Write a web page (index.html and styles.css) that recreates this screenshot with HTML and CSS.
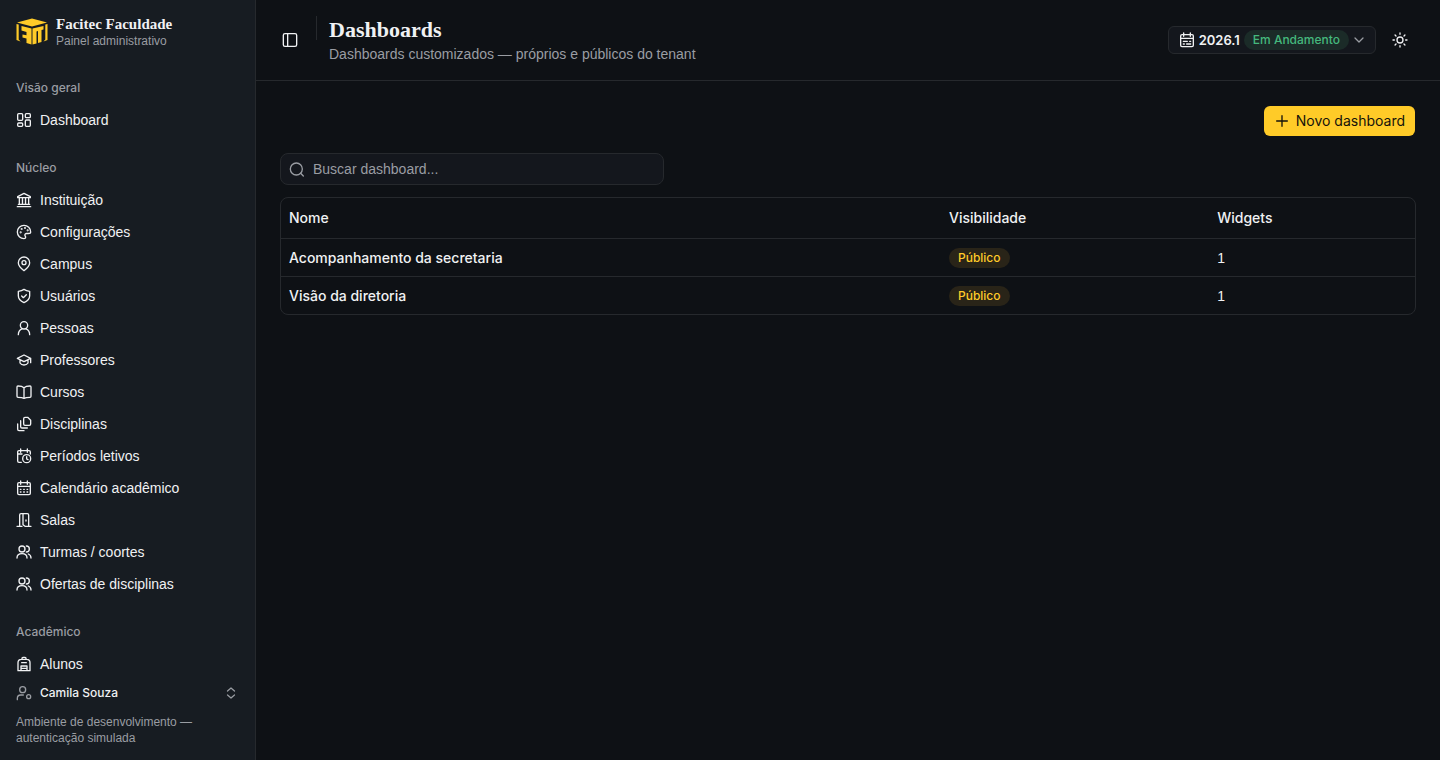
FILE: index.html
```html
<!DOCTYPE html>
<html lang="pt-BR">
  <head>
    <meta charset="UTF-8" />
    <meta name="viewport" content="width=device-width, initial-scale=1.0" />
    <title>Dashboards</title>
    <link rel="stylesheet" href="styles.css">
  </head>
  <body>
    <aside class="sidebar">
      <div class="brand">
        <svg class="brand-logo" viewBox="0 0 32 32" aria-hidden="true">
          <path d="M1 6.500 16 2.500 31 6.500 16 10.500Z" />
          <path d="M.5 8 2.700 8.600V23.500L4.500 25.500.5 24ZM31.500 8 29.300 8.600V23.500L27.500 25.500 31.500 24Z" />
          <path d="M5.500 10 15.500 12.500V28.500L10.500 27V22.500L6.500 21.500V18.500L10.500 19.300V16L5.500 14.500Z" />
          <path d="M16.500 12.500 27.500 10V13.500L25.500 14V26L22 27V15L20.500 15.400V27.500L16.500 28.500Z" />
        </svg>
        <div class="brand-text">
          <strong>Facitec Faculdade</strong>
          <span>Painel administrativo</span>
        </div>
      </div>

      <nav class="nav">
        <section class="group">
          <h2>Visão geral</h2>
          <a href="#"><svg class="icon" viewBox="0 0 24 24"><rect x="2.500" y="2.500" width="7.500" height="10" rx="1.500" /><rect x="14" y="2.500" width="7.500" height="6" rx="1.500" /><rect x="2.500" y="16.500" width="7.500" height="5" rx="1.500" /><rect x="14" y="12" width="7.500" height="9.500" rx="1.500" /></svg>Dashboard</a>
        </section>
        <section class="group">
          <h2>Núcleo</h2>
          <a href="#"><svg class="icon" viewBox="0 0 24 24"><path d="M2.500 8.500V7L12 2l9.500 5v1.500ZM5 9v9M9.700 9v9M14.300 9v9M19 9v9M3.500 18.500h17M2 22h20" /></svg>Instituição</a>
          <a href="#"><svg class="icon" viewBox="0 0 24 24"><path d="M22 12C22 6.500 17.500 2 12 2S2 6.500 2 12s4.500 10 10 10c1.700 0 2.500-1 2.500-2.200 0-1.600-1.200-1.900-1.200-3.300 0-1.300 1-2.200 2.400-2.200h2.800C20.700 14.300 22 13.500 22 12Z" /><circle cx="7" cy="12.500" r=".6" /><circle cx="8.500" cy="7.500" r=".6" /><circle cx="13.500" cy="6" r=".6" /><circle cx="17.500" cy="9.500" r=".6" /></svg>Configurações</a>
          <a href="#"><svg class="icon" viewBox="0 0 24 24"><path d="M12 22c-2.500-2-8.500-6.500-8.500-12a8.500 8.500 0 0 1 17 0c0 5.500-6 10-8.500 12Z" /><circle cx="12" cy="10" r="3" /></svg>Campus</a>
          <a href="#"><svg class="icon" viewBox="0 0 24 24"><path d="M12 2c2.500 1.700 5 2.500 8.500 3v6.500c0 5.500-4 8.500-8.500 10.500-4.500-2-8.500-5-8.500-10.500V5C7 4.500 9.500 3.700 12 2Z" /><path d="m8.500 12 2.500 2.500L15.500 10" /></svg>Usuários</a>
          <a href="#"><svg class="icon" viewBox="0 0 24 24"><circle cx="12" cy="8" r="5.500" /><path d="M3.500 22c0-4.500 2.500-7.500 5.500-8.700M20.500 22c0-4.500-2.500-7.500-5.500-8.700" /></svg>Pessoas</a>
          <a href="#"><svg class="icon" viewBox="0 0 24 24"><path d="M2 9.500 12 4.500l10 5-10 5ZM6 12v4.500c2.500 4 9.500 4 12 0V12M22 9.500V16" /></svg>Professores</a>
          <a href="#"><svg class="icon" viewBox="0 0 24 24"><path d="M12 5.500C10 3.700 7 3 3 3c-1 0-1.500.5-1.500 1.500v14c0 1 .5 1.500 1.500 1.500 4 0 7 .3 9 1.500 2-1.200 5-1.500 9-1.500 1 0 1.500-.5 1.500-1.500v-14C22.500 3.500 22 3 21 3c-4 0-7 .7-9 2.500ZM12 5.500v16" /></svg>Cursos</a>
          <a href="#"><svg class="icon" viewBox="0 0 24 24"><path d="M13.500 2h4L22 6.500V12c0 1.500-.5 2-2 2h-6.500c-1.500 0-2-.5-2-2V4c0-1.500.5-2 2-2ZM7 7v9c0 1.500.5 2 2 2h8M2.500 12v8c0 1.500.5 2 2 2H12" /></svg>Disciplinas</a>
          <a href="#"><svg class="icon" viewBox="0 0 24 24"><path d="M7 1.500v5M17 1.500v5M21.500 9V6c0-1.300-.7-2-2-2h-15c-1.300 0-2 .7-2 2v13.500c0 1.300.7 2 2 2H8M2.500 9H9" /><circle cx="16" cy="16" r="6" /><path d="M16 13v3.500l2 1" /></svg>Períodos letivos</a>
          <a href="#"><svg class="icon" viewBox="0 0 24 24"><rect x="2.500" y="4" width="19" height="18" rx="2" /><path d="M7 1.500v5M17 1.500v5M2.500 9.500h19M6.500 14h1M11.500 14h1M16.500 14h1M6.500 18h1M11.500 18h1M16.500 18h1" /></svg>Calendário acadêmico</a>
          <a href="#"><svg class="icon" viewBox="0 0 24 24"><path d="M1.500 21.500h4V4.500c0-1.500.5-2 2-2h9.500c1.500 0 2 .5 2 2v17h3.500M10.500 2.500v16.500l3 2.500H19M5.500 21.500H9M15 12v1.500" /></svg>Salas</a>
          <a href="#"><svg class="icon" viewBox="0 0 24 24"><circle cx="9" cy="7.500" r="4.500" /><path d="M1.500 21c0-4 3-6.500 7.500-6.500s7.500 2.500 7.500 6.500M15.500 3a4.500 4.500 0 0 1 0 9M18.500 15c2.500 1 4 3 4 6" /></svg>Turmas / coortes</a>
          <a href="#"><svg class="icon" viewBox="0 0 24 24"><circle cx="9" cy="7.500" r="4.500" /><path d="M1.500 21c0-4 3-6.500 7.500-6.500s7.500 2.500 7.500 6.500M15.500 3a4.500 4.500 0 0 1 0 9M18.500 15c2.500 1 4 3 4 6" /></svg>Ofertas de disciplinas</a>
        </section>
        <section class="group">
          <h2>Acadêmico</h2>
          <a href="#"><svg class="icon" viewBox="0 0 24 24"><path d="M9 5V3.500C9 2.500 9.500 2 10.500 2h3c1 0 1.500.5 1.500 1.500V5M3 22V10c0-3.500 2-5 5-5h8c3 0 5 1.500 5 5v12ZM8.500 10h7M7.500 22v-7h9v7M7.500 18.500h9" /></svg>Alunos</a>
        </section>
      </nav>

      <div class="sidebar-footer">
        <button class="user" type="button" aria-haspopup="menu">
          <svg class="icon muted" viewBox="0 0 24 24"><circle cx="10" cy="7" r="4.500" /><path d="M2 22v-2c0-3 2-5 5-5h4" /><circle cx="19" cy="17.500" r="3" /></svg>
          <span>Camila Souza</span>
          <svg class="icon icon-sm muted" viewBox="0 0 24 24"><path d="m5 8 7-6 7 6M5 16l7 6 7-6" /></svg>
        </button>
        <p>Ambiente de desenvolvimento — autenticação simulada</p>
      </div>
    </aside>

    <main class="content">
      <header class="topbar">
        <button class="icon-button" type="button" aria-label="Alternar menu">
          <svg class="icon" viewBox="0 0 24 24"><rect x="2" y="2.500" width="20" height="19" rx="2.500" /><path d="M8.500 2.500v19" /></svg>
        </button>
        <span class="divider"></span>
        <div class="heading">
          <h1>Dashboards</h1>
          <p>Dashboards customizados — próprios e públicos do tenant</p>
        </div>
        <button class="period" type="button" aria-haspopup="listbox">
          <svg class="icon" viewBox="0 0 24 24"><rect x="2.500" y="4" width="19" height="18" rx="2" /><path d="M7 1.500v5M17 1.500v5M2.500 9.500h19M6.500 14h6M16 14h1.500M6.500 18h1.500M11.500 18h6" /></svg>
          <span>2026.1</span>
          <span class="badge badge-green">Em Andamento</span>
          <svg class="icon icon-sm muted" viewBox="0 0 24 24"><path d="m4 8 8 8 8-8" /></svg>
        </button>
        <button class="icon-button icon-button-lg" type="button" aria-label="Alternar tema">
          <svg class="icon" viewBox="0 0 24 24"><circle cx="12" cy="12" r="4.500" /><path d="M12 1.500v2M12 20.500v2M1.500 12h2M20.500 12h2M4.600 4.600 6 6M18 18l1.400 1.400M4.600 19.400 6 18M18 6l1.400-1.400" /></svg>
        </button>
      </header>

      <div class="page">
        <button class="primary" type="button">
          <svg class="icon" viewBox="0 0 24 24"><path d="M12 4v16M4 12h16" /></svg>
          Novo dashboard
        </button>
        <div class="list">
          <label class="search">
            <svg class="icon muted" viewBox="0 0 24 24"><circle cx="11" cy="12" r="9" /><path d="m17.500 18.500 4 4" /></svg>
            <input type="text" placeholder="Buscar dashboard..." aria-label="Buscar dashboard" />
          </label>
          <div class="table-wrap">
            <table>
              <thead>
                <tr>
                  <th class="col-name">Nome</th>
                  <th class="col-visibility">Visibilidade</th>
                  <th>Widgets</th>
                </tr>
              </thead>
              <tbody>
                <tr>
                  <td class="name">Acompanhamento da secretaria</td>
                  <td><span class="badge badge-yellow">Público</span></td>
                  <td>1</td>
                </tr>
                <tr>
                  <td class="name">Visão da diretoria</td>
                  <td><span class="badge badge-yellow">Público</span></td>
                  <td>1</td>
                </tr>
              </tbody>
            </table>
          </div>
        </div>
      </div>
    </main>
  </body>
</html>
```
FILE: styles.css
```css
:root {
  --bg: #0e1115;
  --sidebar: #171c22;
  --field: #14171d;
  --border: #26292d;
  --text: #f0f1f3;
  --muted: #9a9da3;
  --yellow: #ffcb28;
  --green: #45b87d;
  --font-medium: Inter, "Liberation Sans", sans-serif;
}

* {
  box-sizing: border-box;
}

body {
  margin: 0;
  display: flex;
  height: 100vh;
  overflow: hidden;
  background: var(--bg);
  color: var(--text);
  font-family: "Liberation Sans", Arial, sans-serif;
  font-size: 14px;
  line-height: 20px;
}

h1,
h2,
p {
  margin: 0;
}

button,
input {
  font: inherit;
  color: inherit;
}

button {
  display: flex;
  align-items: center;
  border: 0;
  padding: 0;
  background: none;
  cursor: pointer;
}

.icon {
  width: 16px;
  height: 16px;
  flex-shrink: 0;
  fill: none;
  stroke: currentColor;
  stroke-width: 2;
  stroke-linecap: round;
  stroke-linejoin: round;
}

.icon-sm {
  width: 12px;
  height: 12px;
  stroke-width: 2.500;
}

.muted {
  color: var(--muted);
}

/* sidebar */
.sidebar {
  width: 256px;
  flex-shrink: 0;
  display: flex;
  flex-direction: column;
  background: var(--sidebar);
  border-right: 1px solid var(--border);
}

.brand {
  display: flex;
  align-items: center;
  gap: 8px;
  height: 64px;
  flex-shrink: 0;
  padding: 0 16px;
}

.brand-logo {
  width: 32px;
  height: 32px;
  fill: var(--yellow);
}

.brand-text {
  display: flex;
  flex-direction: column;
  font-size: 12px;
  line-height: 16px;
}

.brand-text strong {
  font-family: "Liberation Serif", serif;
  font-size: 15px;
  line-height: 18px;
}

.brand-text span {
  color: var(--muted);
}

.nav {
  flex: 1;
  min-height: 0;
  overflow: hidden;
}

.group {
  padding: 8px;
}

.group h2 {
  padding: 0 8px;
  color: var(--muted);
  font-family: var(--font-medium);
  font-size: 12px;
  font-weight: 500;
  line-height: 32px;
}

.group a {
  display: flex;
  align-items: center;
  gap: 8px;
  height: 32px;
  padding: 0 8px;
  color: inherit;
  text-decoration: none;
}

.sidebar-footer {
  padding: 0 8px 14px;
  font-size: 12px;
  line-height: 16px;
}

.user {
  width: 100%;
  height: 26px;
  gap: 8px;
  padding: 0 10px 0 8px;
  font-family: var(--font-medium);
  font-weight: 500;
}

.user span {
  flex: 1;
  text-align: left;
}

.sidebar-footer p {
  padding: 8px 8px 0;
  color: var(--muted);
}

/* top bar */
.content {
  flex: 1;
  min-width: 0;
}

.topbar {
  display: flex;
  align-items: center;
  padding: 16px 24px 16px 20px;
  border-bottom: 1px solid var(--border);
}

.icon-button {
  justify-content: center;
  width: 28px;
  height: 28px;
}

.icon-button-lg {
  width: 32px;
}

.divider {
  align-self: flex-start;
  width: 1px;
  height: 24px;
  margin: 0 12px;
  background: var(--border);
}

.heading {
  flex: 1;
}

.heading h1 {
  font-family: "Liberation Serif", serif;
  font-size: 22px;
  line-height: 28px;
}

.heading p {
  color: var(--muted);
}

.period {
  height: 28px;
  gap: 4px;
  margin-right: 8px;
  padding: 0 10px;
  border: 1px solid var(--border);
  border-radius: 6px;
  background: var(--field);
  font-family: var(--font-medium);
  font-size: 13px;
  font-weight: 600;
}

.badge {
  display: inline-flex;
  align-items: center;
  height: 20px;
  padding: 0 9px;
  border-radius: 10px;
  font-family: var(--font-medium);
  font-size: 12px;
  font-weight: 500;
}

.badge-green {
  background: #1b2b28;
  color: var(--green);
}

.badge-yellow {
  background: #292418;
  color: var(--yellow);
}

/* page */
.page {
  display: flex;
  flex-direction: column;
  gap: 16px;
  padding: 24px;
}

.primary {
  align-self: flex-end;
  height: 32px;
  gap: 6px;
  padding: 0 10px;
  border: 1px solid transparent;
  border-radius: 7px;
  background: var(--yellow);
  background-clip: padding-box;
  color: #15130b;
  font-family: var(--font-medium);
}

.list {
  display: flex;
  flex-direction: column;
  gap: 12px;
}

.search {
  display: flex;
  align-items: center;
  gap: 8px;
  width: 100%;
  max-width: 384px;
  height: 32px;
  padding: 0 8px;
  border: 1px solid var(--border);
  border-radius: 8px;
  background: var(--field);
}

.search input {
  flex: 1;
  min-width: 0;
  padding: 0;
  border: 0;
  outline: 0;
  background: none;
}

.search input::placeholder {
  color: var(--muted);
  opacity: 1;
}

.table-wrap {
  border: 1px solid var(--border);
  border-radius: 8px;
  overflow: hidden;
}

table {
  width: 100%;
  table-layout: fixed;
  border-collapse: separate;
  border-spacing: 0;
}

th,
td {
  padding: 0 8px;
  text-align: left;
}

th {
  height: 41px;
  border-bottom: 1px solid var(--border);
  font-family: var(--font-medium);
  font-weight: 500;
}

td {
  height: 37px;
}

tr + tr td {
  height: 38px;
  border-top: 1px solid var(--border);
}

.name {
  font-family: var(--font-medium);
  font-weight: 500;
}

.col-name {
  width: 58.200%;
}

.col-visibility {
  width: 23.650%;
}
```
